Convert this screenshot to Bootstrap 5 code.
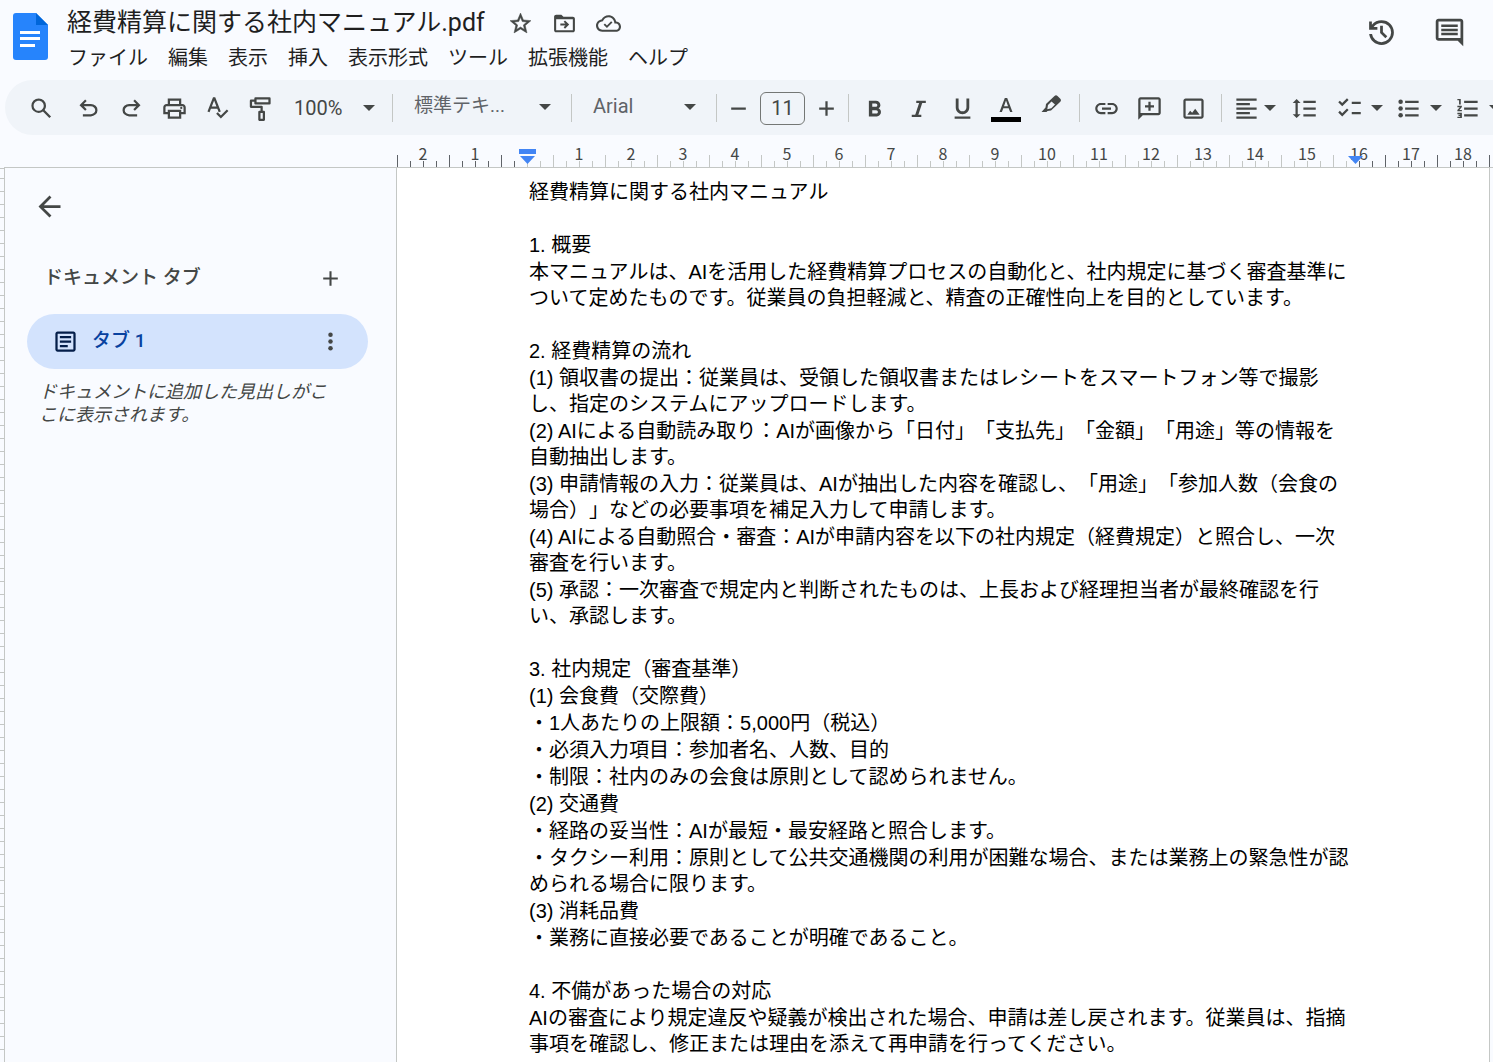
<!DOCTYPE html>
<html lang="ja">
<head>
<meta charset="utf-8">
<meta name="viewport" content="width=device-width, initial-scale=1">
<title>経費精算に関する社内マニュアル.pdf</title>
<link href="https://cdn.jsdelivr.net/npm/bootstrap@5.3.0/dist/css/bootstrap.min.css" rel="stylesheet">
<style>
  :root { --ui: Roboto, "Noto Sans CJK JP", sans-serif; --ink: #444746; --rule: #c4c7c5; --paper: #f9fbff; }
  body { background: var(--paper); color: #1f1f1f; font-family: var(--ui); }
  svg { display: block; flex: none; fill: currentColor; }
  .stroke-icon { fill: none; stroke: currentColor; stroke-width: 2; }
  .i25 { width: 25px; height: 25px; }
  .i27 { width: 27px; height: 27px; }
  .i33 { width: 33px; height: 33px; }
  .caret { width: 12px; height: 6px; }
  .plain-btn { border: 0; background: none; padding: 0; color: var(--ink); display: flex; align-items: center; justify-content: center; flex: none; }

  .app-header { height: 80px; padding: 0 13px; }
  .logo { width: 35px; height: 47px; margin-top: 13px; }
  .titles { margin-left: 19px; }
  .title-row { height: 46px; }
  .doc-title { font-size: 25px; line-height: 30px; font-weight: 400; }
  .title-icons { gap: 19px; margin-left: 23px; }
  .menus { gap: 20px; padding: 1px 0 0 1px; }
  .menus a { color: #1f1f1f; font-size: 20px; line-height: 22px; text-decoration: none; white-space: nowrap; }
  .header-actions { gap: 35px; height: 64px; padding-right: 14px; }

  .toolbar { height: 55px; margin-left: 5px; padding: 1px 0 0 15px; background: #f0f4f9; border-radius: 28px 0 0 28px; }
  .tool { width: 43px; height: 43px; }
  .tool-wide { width: 44px; height: 43px; }
  .split { width: 59px; height: 43px; gap: 8px; }
  .split-tight { width: 56px; height: 43px; gap: 4px; }
  .sep { width: 1px; height: 28px; background: var(--rule); flex: none; }
  .tool-group { padding: 0 6px 0 4px; }
  .tool-group-first { padding: 0 7px 0 3px; }
  .tool-select { appearance: none; border: 0; height: 43px; flex: none; padding: 0 36px 0 21px; font-size: 20px; color: #5f6368;
    background: url("data:image/svg+xml,%3Csvg xmlns='http://www.w3.org/2000/svg' viewBox='0 0 12 6'%3E%3Cpath fill='%23444746' d='M0 0h12L6 6z'/%3E%3C/svg%3E") no-repeat right 20px center / 12px 6px; }
  .zoom-select { width: 110px; padding: 0 30px 0 12px; background-position: right 17px center; color: var(--ink); }
  .style-select { width: 178px; font-size: 19px; padding-bottom: 4px; background-position: right 20px top 17px; }
  .font-select { width: 144px; padding-bottom: 4px; background-position: right 20px top 17px; }
  .size-input { width: 45px; height: 33px; border: 1px solid #747775; border-radius: 6px; background: none; text-align: center; font-size: 20px; color: var(--ink); padding: 0; flex: none; }

  .ruler { height: 33px; border-bottom: 1px solid var(--rule); margin-left: 4px; padding-left: 393px; font-family: "Noto Sans CJK JP", sans-serif; font-size: 16px; line-height: 20px; color: var(--ink); overflow: hidden; }
  .cm { --t: #c4c7c5; --u: var(--t); position: relative; width: 52px; flex: none; text-align: center; padding-top: 8px;
    background:
      linear-gradient(var(--t), var(--t)) 0 100% / 1px 12px no-repeat,
      linear-gradient(var(--t), var(--t)) 13px 100% / 1px 6px no-repeat,
      linear-gradient(var(--u), var(--u)) 26px 100% / 1px 6px no-repeat,
      linear-gradient(var(--u), var(--u)) 39px 100% / 1px 6px no-repeat; }
  .cm-out { --t: #5f6368; }
  .cm-in { --t: #5f6368; --u: #c4c7c5; }
  .cm-edge { --t: #c4c7c5; --u: #5f6368; }
  .indent { position: absolute; width: 17px; height: 15px; bottom: 3px; left: 18px; color: #4285f4; }
  .indent-end { left: 14px; }

  .vruler { width: 5px; border-right: 1px solid var(--rule); flex: none; background: repeating-linear-gradient(var(--rule) 0 1px, transparent 1px 13px) 0 10px; }
  .side { width: 392px; border-right: 1px solid var(--rule); padding: 22px 28px 0 22px; flex: none; }
  .back { margin-left: 6px; }
  .tabs-head { height: 40px; margin-top: 35px; padding: 0 25px 0 17px; color: var(--ink); }
  .tabs-head h2 { font-size: 19px; line-height: 24px; font-weight: 500; }
  .tab-item { height: 55px; margin-top: 16px; border-radius: 28px; background: #d3e3fd; padding: 0 24px 0 25px; }
  .tab-item a { color: #0842a0; font-size: 19px; font-weight: 500; text-decoration: none; margin-left: 13px; }
  .hint { font-size: 18px; line-height: 23px; font-style: italic; color: var(--ink); margin: 11px 0 0 12px; }

  .page { width: 1093px; background: #fff; border-right: 1px solid var(--rule); padding: 11px 130px 0 132px; flex: none;
    font-family: "Liberation Sans", "Noto Sans CJK JP", sans-serif; font-size: 20px; line-height: 26px; color: #000; text-spacing-trim: space-all; white-space: nowrap; }
  .page p, .page h2, .page h3 { font-size: 20px; line-height: 26px; font-weight: 400; margin: 0 0 1px; }
  .page section { margin-top: 27px; }
</style>
<script src="https://cdn.jsdelivr.net/npm/bootstrap@5.3.0/dist/js/bootstrap.bundle.min.js"></script>
</head>
<body class="vh-100 overflow-hidden d-flex flex-column">

<header class="app-header d-flex flex-shrink-0">
  <svg class="logo" viewBox="0 0 35 47" aria-hidden="true"><path fill="#2684fc" d="M3 0h20l12 12v32a3 3 0 0 1-3 3H3a3 3 0 0 1-3-3V3a3 3 0 0 1 3-3z"/><path fill="#0066da" d="M23 0l12 12H23z"/><path fill="#fff" d="M7 18h20v3H7zM7 24h20v3H7zM7 31h15v3H7z"/></svg>
  <div class="titles">
    <div class="title-row d-flex align-items-center">
      <h1 class="doc-title m-0 text-nowrap">経費精算に関する社内マニュアル.pdf</h1>
      <div class="title-icons d-flex">
        <button class="plain-btn" aria-label="スター"><svg class="i25" viewBox="0 0 24 24" stroke="currentColor" stroke-width=".5"><path d="M22 9.240l-7.190-.62L12 2 9.190 8.630 2 9.240l5.460 4.730L5.820 21 12 17.270 18.180 21l-1.630-7.030L22 9.240zM12 15.400l-3.760 2.270 1-4.280-3.320-2.880 4.380-.38L12 6.100l1.710 4.040 4.380.38-3.320 2.880 1 4.280L12 15.400z"/></svg></button>
        <button class="plain-btn" aria-label="移動"><svg class="i25" viewBox="0 0 24 24"><path d="M20 5.500h-9l-2-2H4c-1.100 0-2 .9-2 2v13c0 1.100.9 2 2 2h16c1.100 0 2-.9 2-2v-11c0-1.100-.9-2-2-2zm0 13H4V8h16v10.500z"/><path d="M12.500 17l4-4-4-4-1.300 1.300 1.700 1.700H8v2h4.900l-1.700 1.700z"/></svg></button>
        <button class="plain-btn" aria-label="保存状況"><svg class="i25" viewBox="0 0 24 24"><path d="M19.350 10.040C18.670 6.590 15.640 4 12 4 9.110 4 6.610 5.640 5.360 8.040 2.340 8.360 0 10.910 0 14c0 3.310 2.690 6 6 6h13c2.760 0 5-2.240 5-5 0-2.640-2.050-4.780-4.650-4.960zM19 18H6c-2.210 0-4-1.790-4-4 0-2.050 1.530-3.760 3.560-3.970l1.070-.11.5-.95C8.080 7.140 9.940 6 12 6c2.620 0 4.880 1.860 5.390 4.430l.3 1.500 1.530.11c1.560.1 2.780 1.410 2.780 2.960 0 1.650-1.350 3-3 3zm-8.500-4.200l-1.900-1.900-1.300 1.300 3.200 3.200 5.300-5.300-1.300-1.300z"/></svg></button>
      </div>
    </div>
    <nav class="menus d-flex" aria-label="メニュー">
      <a href="#">ファイル</a><a href="#">編集</a><a href="#">表示</a><a href="#">挿入</a><a href="#">表示形式</a><a href="#">ツール</a><a href="#">拡張機能</a><a href="#">ヘルプ</a>
    </nav>
  </div>
  <div class="header-actions d-flex align-items-center ms-auto">
    <button class="plain-btn" aria-label="変更履歴"><svg class="i33" viewBox="0 -960 960 960"><path d="M480-120q-138 0-240.500-91.500T122-440h82q14 104 92.500 172T480-200q117 0 198.500-81.500T760-480q0-117-81.500-198.500T480-760q-69 0-129 32t-101 88h110v80H120v-240h80v94q51-64 124.500-99T480-840q75 0 140.500 28.500t114 77q48.500 48.500 77 114T840-480q0 75-28.500 140.500t-77 114q-48.500 48.500-114 77T480-120Zm112-192L440-464v-216h80v184l128 128-56 56Z"/></svg></button>
    <button class="plain-btn" aria-label="コメント"><svg class="i33" viewBox="0 -960 960 960"><path d="M240-400h480v-70H240v70Zm0-120h480v-70H240v70Zm0-120h480v-70H240v70ZM880-80 720-240H160q-33 0-56.500-23.500T80-320v-480q0-33 23.500-56.500T160-880h640q33 0 56.500 23.500T880-800v720ZM160-320h640v-480H160v480Z"/></svg></button>
  </div>
</header>

<div class="toolbar d-flex align-items-center flex-shrink-0 overflow-hidden" role="toolbar">
  <button class="plain-btn tool me-1" aria-label="検索"><svg class="i27" viewBox="0 0 24 24"><path d="M20.490 19l-5.730-5.730C15.530 12.200 16 10.910 16 9.500A6.500 6.500 0 1 0 9.500 16c1.410 0 2.700-.47 3.770-1.240L19 20.490 20.490 19zM5 9.500C5 7.010 7.010 5 9.500 5S14 7.010 14 9.500 11.990 14 9.500 14 5 11.990 5 9.500z"/></svg></button>
  <button class="plain-btn tool" aria-label="元に戻す"><svg class="i27" viewBox="0 -960 960 960"><path d="M280-200v-80h284q63 0 109.500-40T720-420q0-60-46.500-100T564-560H312l104 104-56 56-200-200 200-200 56 56-104 104h252q97 0 169.500 63T800-420q0 94-72.500 157T564-200H280Z"/></svg></button>
  <button class="plain-btn tool" aria-label="やり直し"><svg class="i27" viewBox="0 -960 960 960"><path transform="matrix(-1 0 0 1 960 0)" d="M280-200v-80h284q63 0 109.500-40T720-420q0-60-46.500-100T564-560H312l104 104-56 56-200-200 200-200 56 56-104 104h252q97 0 169.500 63T800-420q0 94-72.500 157T564-200H280Z"/></svg></button>
  <button class="plain-btn tool" aria-label="印刷"><svg class="i27" viewBox="0 0 24 24"><path d="M19 8h-1V3H6v5H5c-1.660 0-3 1.340-3 3v6h4v4h12v-4h4v-6c0-1.660-1.340-3-3-3zM8 5h8v3H8V5zm8 12v2H8v-4h8v2zm2-2v-2H6v2H4v-4c0-.55.45-1 1-1h14c.55 0 1 .45 1 1v4h-2z"/><circle cx="18" cy="11.500" r="1"/></svg></button>
  <button class="plain-btn tool" aria-label="スペルチェック"><svg class="i27 stroke-icon" viewBox="0 0 24 24"><path d="M4 15L8.700 3h.6L14 15M5.700 11.200h6.600M11.500 16l3.500 3.500 6-6"/></svg></button>
  <button class="plain-btn tool" aria-label="書式の貼り付け"><svg class="i27 stroke-icon" viewBox="0 0 24 24"><path stroke-linejoin="round" d="M7.500 3h12.500v4.500H7.500zM7.500 5H3.500v5.500H13V14.500M11 15h4v7h-4z"/></svg></button>
  <select class="tool-select zoom-select" aria-label="ズーム"><option>100%</option></select>
  <span class="sep"></span>
  <select class="tool-select style-select" aria-label="スタイル"><option>標準テキ...</option></select>
  <span class="sep"></span>
  <select class="tool-select font-select" aria-label="フォント"><option>Arial</option></select>
  <span class="sep"></span>
  <button class="plain-btn tool" aria-label="縮小"><svg class="i27 stroke-icon" viewBox="0 0 24 24"><path d="M5.500 12h13"/></svg></button>
  <input class="size-input" type="text" value="11" aria-label="フォントサイズ">
  <button class="plain-btn tool" aria-label="拡大"><svg class="i27 stroke-icon" viewBox="0 0 24 24"><path d="M5.500 12h13M12 5.500v13"/></svg></button>
  <span class="sep"></span>
  <div class="tool-group-first d-flex flex-shrink-0">
    <button class="plain-btn tool-wide" aria-label="太字"><svg class="i27" viewBox="0 0 24 24"><path transform="translate(0 1)" d="M15.600 10.790c.97-.67 1.650-1.770 1.650-2.790 0-2.260-1.750-4-4-4H7v14h7.040c2.090 0 3.710-1.700 3.710-3.790 0-1.520-.86-2.820-2.150-3.420zM10 6.500h3c.83 0 1.500.67 1.500 1.500s-.67 1.500-1.500 1.500h-3v-3zm3.500 9H10v-3h3.500c.83 0 1.500.67 1.500 1.500s-.67 1.500-1.500 1.500z"/></svg></button>
    <button class="plain-btn tool-wide" aria-label="斜体"><svg class="i27 stroke-icon" viewBox="0 0 24 24"><path d="M10 6h8.500M6 18.500h8.500" /><path stroke-width="2.600" d="M14.300 6L10.200 18.500"/></svg></button>
    <button class="plain-btn tool-wide" aria-label="下線"><svg class="i27" viewBox="0 0 24 24"><path d="M12 17c3.310 0 6-2.690 6-6V3h-2.500v8c0 1.930-1.570 3.500-3.500 3.500S8.500 12.930 8.500 11V3H6v8c0 3.310 2.690 6 6 6zm-7 2v2h14v-2H5z"/></svg></button>
    <button class="plain-btn tool-wide" aria-label="テキストの色"><svg width="30" height="27" viewBox="0 0 30 27"><path d="M13.800 3h2.400l5.300 14h-2.400l-1.400-3.800h-5.400L10.900 17H8.500zM13 11.200h4L15 5.500z"/><path fill="#000" d="M0 22h30v5H0z"/></svg></button>
    <button class="plain-btn tool-wide" aria-label="ハイライト"><svg class="i27" viewBox="0 0 27 27"><path fill-rule="evenodd" d="M17.500 1q1.500-1.300 3 0l2.800 2.800q1.300 1.500 0 3L14 15.500l-3.500.5-1 1H4.500l4-4.500.5-3.500zM14.500 6.500l-3.500 3.500-.7 4.200 4-.9 3.700-3.700z"/></svg></button>
  </div>
  <span class="sep"></span>
  <div class="tool-group d-flex flex-shrink-0">
    <button class="plain-btn tool-wide" aria-label="リンク"><svg class="i27" viewBox="0 0 24 24"><path d="M3.900 12c0-1.710 1.390-3.100 3.100-3.100h4V7H7c-2.760 0-5 2.240-5 5s2.240 5 5 5h4v-1.900H7c-1.710 0-3.100-1.390-3.100-3.100zM8 13h8v-2H8v2zm9-6h-4v1.900h4c1.710 0 3.100 1.390 3.100 3.100s-1.390 3.100-3.100 3.100h-4V17h4c2.760 0 5-2.240 5-5s-2.240-5-5-5z"/></svg></button>
    <button class="plain-btn tool" aria-label="コメントを追加"><svg class="i27" viewBox="0 0 24 24"><path d="M2 22V4c0-1.100.9-2 2-2h16c1.100 0 2 .9 2 2v12c0 1.100-.9 2-2 2H6zM4 4v12h16V4zM11 6h2v3h3v2h-3v3h-2v-3H8V9h3z"/></svg></button>
    <button class="plain-btn tool-wide" aria-label="画像"><svg class="i27" viewBox="0 0 24 24"><path d="M19 5v14H5V5h14m0-2H5c-1.100 0-2 .9-2 2v14c0 1.100.9 2 2 2h14c1.100 0 2-.9 2-2V5c0-1.100-.9-2-2-2z"/><path d="M6.500 17.500l2.500-3.500 1.800 1.800 2.700-3.600 4 5.300z"/></svg></button>
  </div>
  <span class="sep"></span>
  <div class="ps-1 d-flex flex-shrink-0">
    <button class="plain-btn split-tight" aria-label="配置"><svg class="i27" viewBox="0 0 24 24"><path d="M15 15H3v2h12v-2zm0-8H3v2h12V7zM3 13h18v-2H3v2zm0 8h18v-2H3v2zM3 3v2h18V3H3z"/></svg><svg class="caret" viewBox="0 0 12 6"><path d="M0 0h12L6 6z"/></svg></button>
    <button class="plain-btn tool-wide me-1" aria-label="行間隔"><svg class="i27" viewBox="0 0 24 24"><path d="M6 7h2.500L5 3.500 1.500 7H4v10H1.500L5 20.500 8.500 17H6V7zm5-2v2h11V5H11zm0 14h11v-2H11v2zm0-6h11v-2H11v2z"/></svg></button>
    <button class="plain-btn split" aria-label="チェックリスト"><svg class="i27" viewBox="0 0 24 24"><path d="M22 6h-8v2h8V6zm0 9h-8v2h8v-2zM5.540 10L2 6.460l1.410-1.410 2.120 2.120 4.240-4.240 1.410 1.410L5.540 10zm0 9L2 15.460l1.410-1.410 2.120 2.120 4.240-4.240 1.410 1.410L5.540 19z"/></svg><svg class="caret" viewBox="0 0 12 6"><path d="M0 0h12L6 6z"/></svg></button>
    <button class="plain-btn split" aria-label="箇条書き"><svg class="i27" viewBox="0 0 24 24"><circle cx="5" cy="6" r="2"/><circle cx="5" cy="12" r="2"/><circle cx="5" cy="18" r="2"/><path d="M9 5h12v2H9zM9 11h12v2H9zM9 17h12v2H9z"/></svg><svg class="caret" viewBox="0 0 12 6"><path d="M0 0h12L6 6z"/></svg></button>
    <button class="plain-btn split" aria-label="番号付きリスト"><svg class="i27" viewBox="0 0 24 24"><path d="M3 17h2.500v.6H4v1h1.500v.7H3v1.200h4v-4.700H3zM4.500 8.500H6V3.500H3v1.200h1.500zM3 10.800h2.200L3 13.400v1.100h4v-1.200H4.800L7 10.700V9.600H3zM9 5v2h12V5zm0 14h12v-2H9zm0-6h12v-2H9z"/></svg><svg class="caret" viewBox="0 0 12 6"><path d="M0 0h12L6 6z"/></svg></button>
  </div>
</div>

<div class="ruler d-flex flex-shrink-0">
  <span class="cm cm-out">2</span><span class="cm cm-out">1</span>
  <span class="cm cm-in"><svg class="indent" viewBox="0 0 17 15"><path d="M0 0h17v5H0zM1 7h15l-7.500 8z"/></svg></span>
  <span class="cm">1</span><span class="cm">2</span><span class="cm">3</span><span class="cm">4</span><span class="cm">5</span><span class="cm">6</span><span class="cm">7</span><span class="cm">8</span><span class="cm">9</span><span class="cm">10</span><span class="cm">11</span><span class="cm">12</span><span class="cm">13</span><span class="cm">14</span><span class="cm">15</span>
  <span class="cm cm-edge">16<svg class="indent indent-end" viewBox="0 0 17 15"><path d="M1 7h15l-7.500 8z"/></svg></span>
  <span class="cm cm-out">17</span><span class="cm cm-out">18</span><span class="cm cm-out"></span>
</div>

<div class="d-flex flex-grow-1 overflow-hidden">
  <div class="vruler"></div>
  <aside class="side">
    <button class="plain-btn back" aria-label="戻る"><svg class="i33" viewBox="0 0 24 24"><path d="M20 11H7.830l5.590-5.590L12 4l-8 8 8 8 1.410-1.410L7.830 13H20v-2z"/></svg></button>
    <div class="tabs-head d-flex align-items-center justify-content-between">
      <h2 class="m-0">ドキュメント タブ</h2>
      <button class="plain-btn" aria-label="タブを追加"><svg class="i25" viewBox="0 0 24 24"><path d="M19 13h-6v6h-2v-6H5v-2h6V5h2v6h6v2z"/></svg></button>
    </div>
    <div class="tab-item d-flex align-items-center">
      <svg class="i27" viewBox="0 0 24 24" color="#041e49"><path d="M19 5v14H5V5h14m0-2H5c-1.100 0-2 .9-2 2v14c0 1.100.9 2 2 2h14c1.100 0 2-.9 2-2V5c0-1.100-.9-2-2-2z"/><path d="M14 17H7v-2h7v2zm3-4H7v-2h10v2zm0-4H7V7h10v2z"/></svg>
      <a href="#">タブ 1</a>
      <button class="plain-btn ms-auto" aria-label="タブのオプション"><svg class="i27" viewBox="0 0 24 24"><circle cx="12" cy="6" r="2"/><circle cx="12" cy="12" r="2"/><circle cx="12" cy="18" r="2"/></svg></button>
    </div>
    <p class="hint">ドキュメントに追加した見出しがこ<br>こに表示されます。</p>
  </aside>
  <main class="page">
    <h2>経費精算に関する社内マニュアル</h2>
    <section>
      <h3>1. 概要</h3>
      <p>本マニュアルは、AIを活用した経費精算プロセスの自動化と、社内規定に基づく審査基準に<br>ついて定めたものです。従業員の負担軽減と、精査の正確性向上を目的としています。</p>
    </section>
    <section>
      <h3>2. 経費精算の流れ</h3>
      <p>(1) 領収書の提出：従業員は、受領した領収書またはレシートをスマートフォン等で撮影<br>し、指定のシステムにアップロードします。</p>
      <p>(2) AIによる自動読み取り：AIが画像から「日付」「支払先」「金額」「用途」等の情報を<br>自動抽出します。</p>
      <p>(3) 申請情報の入力：従業員は、AIが抽出した内容を確認し、「用途」「参加人数（会食の<br>場合）」などの必要事項を補足入力して申請します。</p>
      <p>(4) AIによる自動照合・審査：AIが申請内容を以下の社内規定（経費規定）と照合し、一次<br>審査を行います。</p>
      <p>(5) 承認：一次審査で規定内と判断されたものは、上長および経理担当者が最終確認を行<br>い、承認します。</p>
    </section>
    <section>
      <h3>3. 社内規定（審査基準）</h3>
      <p>(1) 会食費（交際費）</p>
      <p>・1人あたりの上限額：5,000円（税込）</p>
      <p>・必須入力項目：参加者名、人数、目的</p>
      <p>・制限：社内のみの会食は原則として認められません。</p>
      <p>(2) 交通費</p>
      <p>・経路の妥当性：AIが最短・最安経路と照合します。</p>
      <p>・タクシー利用：原則として公共交通機関の利用が困難な場合、または業務上の緊急性が認<br>められる場合に限ります。</p>
      <p>(3) 消耗品費</p>
      <p>・業務に直接必要であることが明確であること。</p>
    </section>
    <section>
      <h3>4. 不備があった場合の対応</h3>
      <p>AIの審査により規定違反や疑義が検出された場合、申請は差し戻されます。従業員は、指摘<br>事項を確認し、修正または理由を添えて再申請を行ってください。</p>
    </section>
  </main>
</div>
</body>
</html>
